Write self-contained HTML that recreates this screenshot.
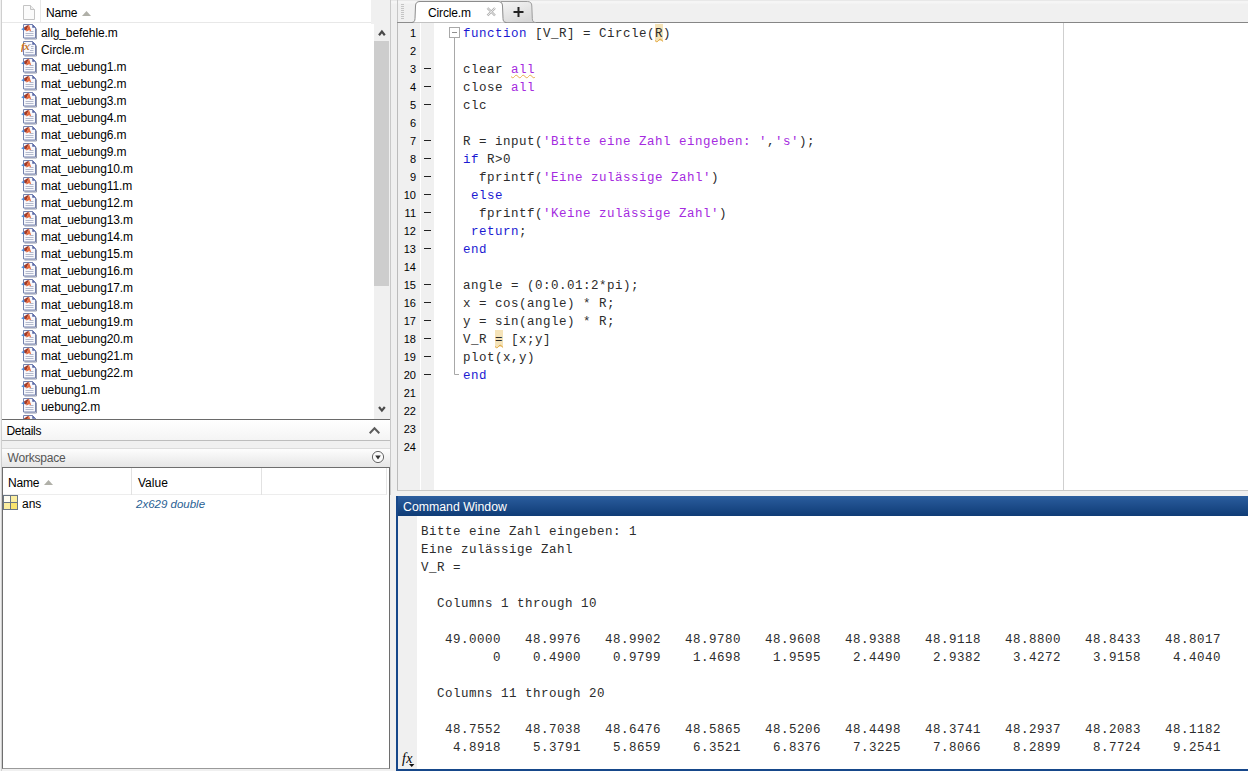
<!DOCTYPE html>
<html><head><meta charset="utf-8"><title>MATLAB</title>
<style>
html,body{margin:0;padding:0}
body{width:1248px;height:771px;overflow:hidden;position:relative;background:#f0f0f0;font-family:"Liberation Sans",sans-serif;font-size:12px;color:#000}
div,span{box-sizing:border-box}
.abs{position:absolute}
#files{left:2px;top:0;width:388px;height:420px;background:#fff;border-bottom:1px solid #6a6a6a;overflow:hidden}
#fhead{left:0;top:0;width:370px;height:23px;border-bottom:1px solid #e8e8e8;border-right:1px solid #e2e2e2;background:#fff}
.row{position:absolute;left:0;height:17px;width:372px;line-height:17px;white-space:nowrap}
.row .fi{position:absolute;left:19px;top:0}
.row .nm{position:absolute;left:39px;top:1px;font-size:12px;letter-spacing:-0.1px}
#sb{left:372px;top:24px;width:16px;height:395px;background:#f0f0f0}
#thumb{left:0;top:17px;width:15px;height:245px;background:#cdcdcd}
#details{left:2px;top:420px;width:388px;height:21px;background:linear-gradient(#fff,#f4f4f4);border-bottom:1px solid #bdbdbd;line-height:22px;padding-left:4.5px;letter-spacing:-0.3px}
#wstitle{left:2px;top:448px;width:388px;height:19px;background:linear-gradient(#fdfdfd,#e6e6e6);border-top:1px solid #dcdcdc;color:#555;line-height:19px;padding-left:5.500px;letter-spacing:-0.2px}
#wstab{left:2px;top:467px;width:388px;height:302px;background:#fff;border:1px solid #6e6e6e;border-bottom:1px solid #9a9a9a}
#vline1{left:0;top:0;width:2px;height:771px;background:#f0f0f0;border-right:1px solid #cfcfcf}
#ed{left:397px;top:23px;width:851px;height:468px;background:#fff;border-left:1px solid #bcbcbc;border-bottom:1px solid #c8c8c8}
#gut1{left:0;top:0;width:22px;height:467px;background:#f0f0f0}
#gut2{left:23px;top:0;width:13px;height:467px;background:#f0f0f0}
.ln{position:absolute;left:0;width:18px;margin-top:0;text-align:right;height:18px;line-height:18px;font-size:11px}
.ds{position:absolute;left:26px;width:7px;height:1px;background:#222}
.cl{position:absolute;left:65px;margin-top:1px;height:18px;line-height:18px;white-space:pre;font-family:"Liberation Mono",monospace;font-size:12.5px;letter-spacing:0.5px;color:#2c2c2c}
.k{color:#1a1ad2}.s{color:#a52be0}
.hl{background:#f5e3b8;padding:3px 0 0 0;text-decoration:underline wavy #e0a030 1px;text-underline-offset:1px}
.sq{text-decoration:underline wavy #e8b050 1px;text-underline-offset:1px}
#cw{left:396px;top:496px;width:852px;height:275px;background:#fff;border-left:2px solid #16478a;border-bottom:2px solid #16478a}
#cwt{left:0;top:0;width:850px;height:20px;background:linear-gradient(#2b5d9e,#0f3c76);color:#fff;line-height:23px;padding-left:5px;font-size:12.3px;overflow:hidden}
#cwg{left:0;top:20px;width:19px;height:253px;background:#f0f0f0}
.cm{position:absolute;left:23px;margin-top:1px;height:18px;line-height:18px;white-space:pre;font-family:"Liberation Mono",monospace;font-size:12.5px;letter-spacing:0.5px;color:#2c2c2c}
</style></head><body>

<div id="files" class="abs">
<div id="fhead" class="abs"><svg class="abs" style="left:20px;top:5px" width="14" height="16" viewBox="0 0 14 16"><path d="M1.5 0.5h7l4 4v10h-11z" fill="#fbfbfb" stroke="#c4c4c4"/><path d="M8.5 0.5v4h4" fill="#eee" stroke="#c4c4c4"/></svg><div class="abs" style="left:38px;top:0;width:1px;height:23px;background:#e8e8e8"></div><span class="abs" style="left:44px;top:5px;font-size:12px;line-height:16px;letter-spacing:-0.2px">Name</span><svg class="abs" style="left:80px;top:11px" width="9" height="5"><path d="M0 5L4.5 0L9 5z" fill="#b0b0a8"/></svg></div>
<div class="row" style="top:24px"><svg class="fi" width="16" height="16" viewBox="0 0 16 16"><path d="M3.500 15H15.500V4.500" fill="none" stroke="#9499ad" stroke-width="1"/><path d="M2.500 0.500H11.500L14.500 3.500V14H2.500z" fill="#f7f8fc" stroke="#7482ae" stroke-width="1"/><path d="M11.500 0.500V3.500H14.500z" fill="#5c6aa8" stroke="#6674ac" stroke-width="0.600"/><path d="M8.500 7.500h4M4.500 9.500h8M4.500 11.500h8" stroke="#b4bacd" stroke-width="1"/><path d="M0.200 5.200L3 3.600L4.600 5.600L2.600 6.600z" fill="#4a8ad8"/><path d="M3 3.600L6 1.400L8 0.800L5.200 7L3.600 5.600z" fill="#a23a26"/><path d="M8 0.800L10.200 7.200L8 6.200L5.600 7.400L5.200 7z" fill="#e8693a"/></svg><span class="nm">allg_befehle.m</span></div>
<div class="row" style="top:41px"><svg class="fi" width="16" height="16" viewBox="0 0 16 16"><path d="M3.500 15H15.500V4.500" fill="none" stroke="#9499ad" stroke-width="1"/><path d="M2.500 0.500H11.500L14.500 3.500V14H2.500z" fill="#f7f8fc" stroke="#7482ae" stroke-width="1"/><path d="M11.500 0.500V3.500H14.500z" fill="#5c6aa8" stroke="#6674ac" stroke-width="0.600"/><path d="M7.500 3.500h3M10 5.500h2.500M10 7.500h2.500M9 9.500h3.500M4.500 11.500h8" stroke="#b4bacd" stroke-width="1"/><text x="0" y="9" font-family="Liberation Serif, serif" font-style="italic" font-weight="bold" font-size="11" letter-spacing="-0.300" fill="#c87422">fx</text></svg><span class="nm">Circle.m</span></div>
<div class="row" style="top:58px"><svg class="fi" width="16" height="16" viewBox="0 0 16 16"><path d="M3.500 15H15.500V4.500" fill="none" stroke="#9499ad" stroke-width="1"/><path d="M2.500 0.500H11.500L14.500 3.500V14H2.500z" fill="#f7f8fc" stroke="#7482ae" stroke-width="1"/><path d="M11.500 0.500V3.500H14.500z" fill="#5c6aa8" stroke="#6674ac" stroke-width="0.600"/><path d="M8.500 7.500h4M4.500 9.500h8M4.500 11.500h8" stroke="#b4bacd" stroke-width="1"/><path d="M0.200 5.200L3 3.600L4.600 5.600L2.600 6.600z" fill="#4a8ad8"/><path d="M3 3.600L6 1.400L8 0.800L5.200 7L3.600 5.600z" fill="#a23a26"/><path d="M8 0.800L10.200 7.200L8 6.200L5.600 7.400L5.200 7z" fill="#e8693a"/></svg><span class="nm">mat_uebung1.m</span></div>
<div class="row" style="top:75px"><svg class="fi" width="16" height="16" viewBox="0 0 16 16"><path d="M3.500 15H15.500V4.500" fill="none" stroke="#9499ad" stroke-width="1"/><path d="M2.500 0.500H11.500L14.500 3.500V14H2.500z" fill="#f7f8fc" stroke="#7482ae" stroke-width="1"/><path d="M11.500 0.500V3.500H14.500z" fill="#5c6aa8" stroke="#6674ac" stroke-width="0.600"/><path d="M8.500 7.500h4M4.500 9.500h8M4.500 11.500h8" stroke="#b4bacd" stroke-width="1"/><path d="M0.200 5.200L3 3.600L4.600 5.600L2.600 6.600z" fill="#4a8ad8"/><path d="M3 3.600L6 1.400L8 0.800L5.200 7L3.600 5.600z" fill="#a23a26"/><path d="M8 0.800L10.200 7.200L8 6.200L5.600 7.400L5.200 7z" fill="#e8693a"/></svg><span class="nm">mat_uebung2.m</span></div>
<div class="row" style="top:92px"><svg class="fi" width="16" height="16" viewBox="0 0 16 16"><path d="M3.500 15H15.500V4.500" fill="none" stroke="#9499ad" stroke-width="1"/><path d="M2.500 0.500H11.500L14.500 3.500V14H2.500z" fill="#f7f8fc" stroke="#7482ae" stroke-width="1"/><path d="M11.500 0.500V3.500H14.500z" fill="#5c6aa8" stroke="#6674ac" stroke-width="0.600"/><path d="M8.500 7.500h4M4.500 9.500h8M4.500 11.500h8" stroke="#b4bacd" stroke-width="1"/><path d="M0.200 5.200L3 3.600L4.600 5.600L2.600 6.600z" fill="#4a8ad8"/><path d="M3 3.600L6 1.400L8 0.800L5.200 7L3.600 5.600z" fill="#a23a26"/><path d="M8 0.800L10.200 7.200L8 6.200L5.600 7.400L5.200 7z" fill="#e8693a"/></svg><span class="nm">mat_uebung3.m</span></div>
<div class="row" style="top:109px"><svg class="fi" width="16" height="16" viewBox="0 0 16 16"><path d="M3.500 15H15.500V4.500" fill="none" stroke="#9499ad" stroke-width="1"/><path d="M2.500 0.500H11.500L14.500 3.500V14H2.500z" fill="#f7f8fc" stroke="#7482ae" stroke-width="1"/><path d="M11.500 0.500V3.500H14.500z" fill="#5c6aa8" stroke="#6674ac" stroke-width="0.600"/><path d="M8.500 7.500h4M4.500 9.500h8M4.500 11.500h8" stroke="#b4bacd" stroke-width="1"/><path d="M0.200 5.200L3 3.600L4.600 5.600L2.600 6.600z" fill="#4a8ad8"/><path d="M3 3.600L6 1.400L8 0.800L5.200 7L3.600 5.600z" fill="#a23a26"/><path d="M8 0.800L10.200 7.200L8 6.200L5.600 7.400L5.200 7z" fill="#e8693a"/></svg><span class="nm">mat_uebung4.m</span></div>
<div class="row" style="top:126px"><svg class="fi" width="16" height="16" viewBox="0 0 16 16"><path d="M3.500 15H15.500V4.500" fill="none" stroke="#9499ad" stroke-width="1"/><path d="M2.500 0.500H11.500L14.500 3.500V14H2.500z" fill="#f7f8fc" stroke="#7482ae" stroke-width="1"/><path d="M11.500 0.500V3.500H14.500z" fill="#5c6aa8" stroke="#6674ac" stroke-width="0.600"/><path d="M8.500 7.500h4M4.500 9.500h8M4.500 11.500h8" stroke="#b4bacd" stroke-width="1"/><path d="M0.200 5.200L3 3.600L4.600 5.600L2.600 6.600z" fill="#4a8ad8"/><path d="M3 3.600L6 1.400L8 0.800L5.200 7L3.600 5.600z" fill="#a23a26"/><path d="M8 0.800L10.200 7.200L8 6.200L5.600 7.400L5.200 7z" fill="#e8693a"/></svg><span class="nm">mat_uebung6.m</span></div>
<div class="row" style="top:143px"><svg class="fi" width="16" height="16" viewBox="0 0 16 16"><path d="M3.500 15H15.500V4.500" fill="none" stroke="#9499ad" stroke-width="1"/><path d="M2.500 0.500H11.500L14.500 3.500V14H2.500z" fill="#f7f8fc" stroke="#7482ae" stroke-width="1"/><path d="M11.500 0.500V3.500H14.500z" fill="#5c6aa8" stroke="#6674ac" stroke-width="0.600"/><path d="M8.500 7.500h4M4.500 9.500h8M4.500 11.500h8" stroke="#b4bacd" stroke-width="1"/><path d="M0.200 5.200L3 3.600L4.600 5.600L2.600 6.600z" fill="#4a8ad8"/><path d="M3 3.600L6 1.400L8 0.800L5.200 7L3.600 5.600z" fill="#a23a26"/><path d="M8 0.800L10.200 7.200L8 6.200L5.600 7.400L5.200 7z" fill="#e8693a"/></svg><span class="nm">mat_uebung9.m</span></div>
<div class="row" style="top:160px"><svg class="fi" width="16" height="16" viewBox="0 0 16 16"><path d="M3.500 15H15.500V4.500" fill="none" stroke="#9499ad" stroke-width="1"/><path d="M2.500 0.500H11.500L14.500 3.500V14H2.500z" fill="#f7f8fc" stroke="#7482ae" stroke-width="1"/><path d="M11.500 0.500V3.500H14.500z" fill="#5c6aa8" stroke="#6674ac" stroke-width="0.600"/><path d="M8.500 7.500h4M4.500 9.500h8M4.500 11.500h8" stroke="#b4bacd" stroke-width="1"/><path d="M0.200 5.200L3 3.600L4.600 5.600L2.600 6.600z" fill="#4a8ad8"/><path d="M3 3.600L6 1.400L8 0.800L5.200 7L3.600 5.600z" fill="#a23a26"/><path d="M8 0.800L10.200 7.200L8 6.200L5.600 7.400L5.200 7z" fill="#e8693a"/></svg><span class="nm">mat_uebung10.m</span></div>
<div class="row" style="top:177px"><svg class="fi" width="16" height="16" viewBox="0 0 16 16"><path d="M3.500 15H15.500V4.500" fill="none" stroke="#9499ad" stroke-width="1"/><path d="M2.500 0.500H11.500L14.500 3.500V14H2.500z" fill="#f7f8fc" stroke="#7482ae" stroke-width="1"/><path d="M11.500 0.500V3.500H14.500z" fill="#5c6aa8" stroke="#6674ac" stroke-width="0.600"/><path d="M8.500 7.500h4M4.500 9.500h8M4.500 11.500h8" stroke="#b4bacd" stroke-width="1"/><path d="M0.200 5.200L3 3.600L4.600 5.600L2.600 6.600z" fill="#4a8ad8"/><path d="M3 3.600L6 1.400L8 0.800L5.200 7L3.600 5.600z" fill="#a23a26"/><path d="M8 0.800L10.200 7.200L8 6.200L5.600 7.400L5.200 7z" fill="#e8693a"/></svg><span class="nm">mat_uebung11.m</span></div>
<div class="row" style="top:194px"><svg class="fi" width="16" height="16" viewBox="0 0 16 16"><path d="M3.500 15H15.500V4.500" fill="none" stroke="#9499ad" stroke-width="1"/><path d="M2.500 0.500H11.500L14.500 3.500V14H2.500z" fill="#f7f8fc" stroke="#7482ae" stroke-width="1"/><path d="M11.500 0.500V3.500H14.500z" fill="#5c6aa8" stroke="#6674ac" stroke-width="0.600"/><path d="M8.500 7.500h4M4.500 9.500h8M4.500 11.500h8" stroke="#b4bacd" stroke-width="1"/><path d="M0.200 5.200L3 3.600L4.600 5.600L2.600 6.600z" fill="#4a8ad8"/><path d="M3 3.600L6 1.400L8 0.800L5.200 7L3.600 5.600z" fill="#a23a26"/><path d="M8 0.800L10.200 7.200L8 6.200L5.600 7.400L5.200 7z" fill="#e8693a"/></svg><span class="nm">mat_uebung12.m</span></div>
<div class="row" style="top:211px"><svg class="fi" width="16" height="16" viewBox="0 0 16 16"><path d="M3.500 15H15.500V4.500" fill="none" stroke="#9499ad" stroke-width="1"/><path d="M2.500 0.500H11.500L14.500 3.500V14H2.500z" fill="#f7f8fc" stroke="#7482ae" stroke-width="1"/><path d="M11.500 0.500V3.500H14.500z" fill="#5c6aa8" stroke="#6674ac" stroke-width="0.600"/><path d="M8.500 7.500h4M4.500 9.500h8M4.500 11.500h8" stroke="#b4bacd" stroke-width="1"/><path d="M0.200 5.200L3 3.600L4.600 5.600L2.600 6.600z" fill="#4a8ad8"/><path d="M3 3.600L6 1.400L8 0.800L5.200 7L3.600 5.600z" fill="#a23a26"/><path d="M8 0.800L10.200 7.200L8 6.200L5.600 7.400L5.200 7z" fill="#e8693a"/></svg><span class="nm">mat_uebung13.m</span></div>
<div class="row" style="top:228px"><svg class="fi" width="16" height="16" viewBox="0 0 16 16"><path d="M3.500 15H15.500V4.500" fill="none" stroke="#9499ad" stroke-width="1"/><path d="M2.500 0.500H11.500L14.500 3.500V14H2.500z" fill="#f7f8fc" stroke="#7482ae" stroke-width="1"/><path d="M11.500 0.500V3.500H14.500z" fill="#5c6aa8" stroke="#6674ac" stroke-width="0.600"/><path d="M8.500 7.500h4M4.500 9.500h8M4.500 11.500h8" stroke="#b4bacd" stroke-width="1"/><path d="M0.200 5.200L3 3.600L4.600 5.600L2.600 6.600z" fill="#4a8ad8"/><path d="M3 3.600L6 1.400L8 0.800L5.200 7L3.600 5.600z" fill="#a23a26"/><path d="M8 0.800L10.200 7.200L8 6.200L5.600 7.400L5.200 7z" fill="#e8693a"/></svg><span class="nm">mat_uebung14.m</span></div>
<div class="row" style="top:245px"><svg class="fi" width="16" height="16" viewBox="0 0 16 16"><path d="M3.500 15H15.500V4.500" fill="none" stroke="#9499ad" stroke-width="1"/><path d="M2.500 0.500H11.500L14.500 3.500V14H2.500z" fill="#f7f8fc" stroke="#7482ae" stroke-width="1"/><path d="M11.500 0.500V3.500H14.500z" fill="#5c6aa8" stroke="#6674ac" stroke-width="0.600"/><path d="M8.500 7.500h4M4.500 9.500h8M4.500 11.500h8" stroke="#b4bacd" stroke-width="1"/><path d="M0.200 5.200L3 3.600L4.600 5.600L2.600 6.600z" fill="#4a8ad8"/><path d="M3 3.600L6 1.400L8 0.800L5.200 7L3.600 5.600z" fill="#a23a26"/><path d="M8 0.800L10.200 7.200L8 6.200L5.600 7.400L5.200 7z" fill="#e8693a"/></svg><span class="nm">mat_uebung15.m</span></div>
<div class="row" style="top:262px"><svg class="fi" width="16" height="16" viewBox="0 0 16 16"><path d="M3.500 15H15.500V4.500" fill="none" stroke="#9499ad" stroke-width="1"/><path d="M2.500 0.500H11.500L14.500 3.500V14H2.500z" fill="#f7f8fc" stroke="#7482ae" stroke-width="1"/><path d="M11.500 0.500V3.500H14.500z" fill="#5c6aa8" stroke="#6674ac" stroke-width="0.600"/><path d="M8.500 7.500h4M4.500 9.500h8M4.500 11.500h8" stroke="#b4bacd" stroke-width="1"/><path d="M0.200 5.200L3 3.600L4.600 5.600L2.600 6.600z" fill="#4a8ad8"/><path d="M3 3.600L6 1.400L8 0.800L5.200 7L3.600 5.600z" fill="#a23a26"/><path d="M8 0.800L10.200 7.200L8 6.200L5.600 7.400L5.200 7z" fill="#e8693a"/></svg><span class="nm">mat_uebung16.m</span></div>
<div class="row" style="top:279px"><svg class="fi" width="16" height="16" viewBox="0 0 16 16"><path d="M3.500 15H15.500V4.500" fill="none" stroke="#9499ad" stroke-width="1"/><path d="M2.500 0.500H11.500L14.500 3.500V14H2.500z" fill="#f7f8fc" stroke="#7482ae" stroke-width="1"/><path d="M11.500 0.500V3.500H14.500z" fill="#5c6aa8" stroke="#6674ac" stroke-width="0.600"/><path d="M8.500 7.500h4M4.500 9.500h8M4.500 11.500h8" stroke="#b4bacd" stroke-width="1"/><path d="M0.200 5.200L3 3.600L4.600 5.600L2.600 6.600z" fill="#4a8ad8"/><path d="M3 3.600L6 1.400L8 0.800L5.200 7L3.600 5.600z" fill="#a23a26"/><path d="M8 0.800L10.200 7.200L8 6.200L5.600 7.400L5.200 7z" fill="#e8693a"/></svg><span class="nm">mat_uebung17.m</span></div>
<div class="row" style="top:296px"><svg class="fi" width="16" height="16" viewBox="0 0 16 16"><path d="M3.500 15H15.500V4.500" fill="none" stroke="#9499ad" stroke-width="1"/><path d="M2.500 0.500H11.500L14.500 3.500V14H2.500z" fill="#f7f8fc" stroke="#7482ae" stroke-width="1"/><path d="M11.500 0.500V3.500H14.500z" fill="#5c6aa8" stroke="#6674ac" stroke-width="0.600"/><path d="M8.500 7.500h4M4.500 9.500h8M4.500 11.500h8" stroke="#b4bacd" stroke-width="1"/><path d="M0.200 5.200L3 3.600L4.600 5.600L2.600 6.600z" fill="#4a8ad8"/><path d="M3 3.600L6 1.400L8 0.800L5.200 7L3.600 5.600z" fill="#a23a26"/><path d="M8 0.800L10.200 7.200L8 6.200L5.600 7.400L5.200 7z" fill="#e8693a"/></svg><span class="nm">mat_uebung18.m</span></div>
<div class="row" style="top:313px"><svg class="fi" width="16" height="16" viewBox="0 0 16 16"><path d="M3.500 15H15.500V4.500" fill="none" stroke="#9499ad" stroke-width="1"/><path d="M2.500 0.500H11.500L14.500 3.500V14H2.500z" fill="#f7f8fc" stroke="#7482ae" stroke-width="1"/><path d="M11.500 0.500V3.500H14.500z" fill="#5c6aa8" stroke="#6674ac" stroke-width="0.600"/><path d="M8.500 7.500h4M4.500 9.500h8M4.500 11.500h8" stroke="#b4bacd" stroke-width="1"/><path d="M0.200 5.200L3 3.600L4.600 5.600L2.600 6.600z" fill="#4a8ad8"/><path d="M3 3.600L6 1.400L8 0.800L5.200 7L3.600 5.600z" fill="#a23a26"/><path d="M8 0.800L10.200 7.200L8 6.200L5.600 7.400L5.200 7z" fill="#e8693a"/></svg><span class="nm">mat_uebung19.m</span></div>
<div class="row" style="top:330px"><svg class="fi" width="16" height="16" viewBox="0 0 16 16"><path d="M3.500 15H15.500V4.500" fill="none" stroke="#9499ad" stroke-width="1"/><path d="M2.500 0.500H11.500L14.500 3.500V14H2.500z" fill="#f7f8fc" stroke="#7482ae" stroke-width="1"/><path d="M11.500 0.500V3.500H14.500z" fill="#5c6aa8" stroke="#6674ac" stroke-width="0.600"/><path d="M8.500 7.500h4M4.500 9.500h8M4.500 11.500h8" stroke="#b4bacd" stroke-width="1"/><path d="M0.200 5.200L3 3.600L4.600 5.600L2.600 6.600z" fill="#4a8ad8"/><path d="M3 3.600L6 1.400L8 0.800L5.200 7L3.600 5.600z" fill="#a23a26"/><path d="M8 0.800L10.200 7.200L8 6.200L5.600 7.400L5.200 7z" fill="#e8693a"/></svg><span class="nm">mat_uebung20.m</span></div>
<div class="row" style="top:347px"><svg class="fi" width="16" height="16" viewBox="0 0 16 16"><path d="M3.500 15H15.500V4.500" fill="none" stroke="#9499ad" stroke-width="1"/><path d="M2.500 0.500H11.500L14.500 3.500V14H2.500z" fill="#f7f8fc" stroke="#7482ae" stroke-width="1"/><path d="M11.500 0.500V3.500H14.500z" fill="#5c6aa8" stroke="#6674ac" stroke-width="0.600"/><path d="M8.500 7.500h4M4.500 9.500h8M4.500 11.500h8" stroke="#b4bacd" stroke-width="1"/><path d="M0.200 5.200L3 3.600L4.600 5.600L2.600 6.600z" fill="#4a8ad8"/><path d="M3 3.600L6 1.400L8 0.800L5.200 7L3.600 5.600z" fill="#a23a26"/><path d="M8 0.800L10.200 7.200L8 6.200L5.600 7.400L5.200 7z" fill="#e8693a"/></svg><span class="nm">mat_uebung21.m</span></div>
<div class="row" style="top:364px"><svg class="fi" width="16" height="16" viewBox="0 0 16 16"><path d="M3.500 15H15.500V4.500" fill="none" stroke="#9499ad" stroke-width="1"/><path d="M2.500 0.500H11.500L14.500 3.500V14H2.500z" fill="#f7f8fc" stroke="#7482ae" stroke-width="1"/><path d="M11.500 0.500V3.500H14.500z" fill="#5c6aa8" stroke="#6674ac" stroke-width="0.600"/><path d="M8.500 7.500h4M4.500 9.500h8M4.500 11.500h8" stroke="#b4bacd" stroke-width="1"/><path d="M0.200 5.200L3 3.600L4.600 5.600L2.600 6.600z" fill="#4a8ad8"/><path d="M3 3.600L6 1.400L8 0.800L5.200 7L3.600 5.600z" fill="#a23a26"/><path d="M8 0.800L10.200 7.200L8 6.200L5.600 7.400L5.200 7z" fill="#e8693a"/></svg><span class="nm">mat_uebung22.m</span></div>
<div class="row" style="top:381px"><svg class="fi" width="16" height="16" viewBox="0 0 16 16"><path d="M3.500 15H15.500V4.500" fill="none" stroke="#9499ad" stroke-width="1"/><path d="M2.500 0.500H11.500L14.500 3.500V14H2.500z" fill="#f7f8fc" stroke="#7482ae" stroke-width="1"/><path d="M11.500 0.500V3.500H14.500z" fill="#5c6aa8" stroke="#6674ac" stroke-width="0.600"/><path d="M8.500 7.500h4M4.500 9.500h8M4.500 11.500h8" stroke="#b4bacd" stroke-width="1"/><path d="M0.200 5.200L3 3.600L4.600 5.600L2.600 6.600z" fill="#4a8ad8"/><path d="M3 3.600L6 1.400L8 0.800L5.200 7L3.600 5.600z" fill="#a23a26"/><path d="M8 0.800L10.200 7.200L8 6.200L5.600 7.400L5.200 7z" fill="#e8693a"/></svg><span class="nm">uebung1.m</span></div>
<div class="row" style="top:398px"><svg class="fi" width="16" height="16" viewBox="0 0 16 16"><path d="M3.500 15H15.500V4.500" fill="none" stroke="#9499ad" stroke-width="1"/><path d="M2.500 0.500H11.500L14.500 3.500V14H2.500z" fill="#f7f8fc" stroke="#7482ae" stroke-width="1"/><path d="M11.500 0.500V3.500H14.500z" fill="#5c6aa8" stroke="#6674ac" stroke-width="0.600"/><path d="M8.500 7.500h4M4.500 9.500h8M4.500 11.500h8" stroke="#b4bacd" stroke-width="1"/><path d="M0.200 5.200L3 3.600L4.600 5.600L2.600 6.600z" fill="#4a8ad8"/><path d="M3 3.600L6 1.400L8 0.800L5.200 7L3.600 5.600z" fill="#a23a26"/><path d="M8 0.800L10.200 7.200L8 6.200L5.600 7.400L5.200 7z" fill="#e8693a"/></svg><span class="nm">uebung2.m</span></div>
<div class="row" style="top:415px"><svg class="fi" width="16" height="16" viewBox="0 0 16 16"><path d="M3.500 15H15.500V4.500" fill="none" stroke="#9499ad" stroke-width="1"/><path d="M2.500 0.500H11.500L14.500 3.500V14H2.500z" fill="#f7f8fc" stroke="#7482ae" stroke-width="1"/><path d="M11.500 0.500V3.500H14.500z" fill="#5c6aa8" stroke="#6674ac" stroke-width="0.600"/><path d="M8.500 7.500h4M4.500 9.500h8M4.500 11.500h8" stroke="#b4bacd" stroke-width="1"/><path d="M0.200 5.200L3 3.600L4.600 5.600L2.600 6.600z" fill="#4a8ad8"/><path d="M3 3.600L6 1.400L8 0.800L5.200 7L3.600 5.600z" fill="#a23a26"/><path d="M8 0.800L10.200 7.200L8 6.200L5.600 7.400L5.200 7z" fill="#e8693a"/></svg><span class="nm"></span></div>
<div class="abs" style="left:369px;top:0;width:19px;height:24px;background:#f0f0f0"></div><div id="sb" class="abs"><div id="thumb" class="abs"></div><svg class="abs" style="left:4px;top:5px" width="8" height="8"><path d="M1 6.200L3.900 2.600L6.800 6.200" fill="none" stroke="#4a4a4a" stroke-width="2.200"/></svg><svg class="abs" style="left:4px;top:381px" width="8" height="8"><path d="M1 2L3.900 5.600L6.800 2" fill="none" stroke="#4a4a4a" stroke-width="2.200"/></svg></div>
</div>
<div id="details" class="abs">Details<svg class="abs" style="left:367px;top:6px" width="11" height="9"><path d="M0.700 7.200L5.500 2.300L10.300 7.200" fill="none" stroke="#5c5c5c" stroke-width="2"/></svg></div>
<div id="wstitle" class="abs">Workspace<svg class="abs" style="left:369px;top:1px" width="14" height="14" viewBox="0 0 14 14"><circle cx="7" cy="7" r="5.600" fill="#fafafa" stroke="#666" stroke-width="1"/><path d="M4.200 5.500h5.600L7 9.500z" fill="#333"/></svg></div>
<div id="wstab" class="abs"><div class="abs" style="left:0;top:0;width:384px;height:27px;border-bottom:1px solid #ededed;border-right:1px solid #e6e6e6"></div><div class="abs" style="left:128px;top:0;width:1px;height:27px;background:#e2e2e2"></div><div class="abs" style="left:258px;top:0;width:1px;height:27px;background:#e2e2e2"></div><span class="abs" style="left:5px;top:7px;line-height:16px;font-size:12px;letter-spacing:-0.2px">Name</span><svg class="abs" style="left:41px;top:12px" width="9" height="5"><path d="M0 5L4.500 0L9 5z" fill="#b0b0a8"/></svg><span class="abs" style="left:135px;top:7px;line-height:16px;font-size:12px">Value</span><svg class="abs" style="left:0px;top:27px" width="15" height="15" viewBox="0 0 15 15"><rect x="0.500" y="0.500" width="14" height="14" fill="#fbeea0" stroke="#6a7684"/><rect x="1" y="1" width="6" height="6" fill="#fffdf2"/><rect x="8" y="8" width="6" height="6" fill="#f9e36e"/><path d="M7.500 1v13M1 7.500h13" stroke="#6a7684" stroke-width="1"/></svg><span class="abs" style="left:19px;top:28px;line-height:16px;font-size:12px">ans</span><span class="abs" style="left:133px;top:28px;line-height:16px;font-size:11.5px;font-style:italic;color:#2a5f94">2x629 double</span></div>
<div id="vline1" class="abs"></div>
<div class="abs" style="left:391px;top:0;width:857px;height:23px;background:linear-gradient(#e8e8e8 0,#e8e8e8 1px,#f5f5f5 1px,#f5f5f5 3px,#f0f0f0 4px)"></div>
<div class="abs" style="left:390px;top:0;width:1px;height:495px;background:#c9c9c9"></div>
<div class="abs" style="left:397px;top:22px;width:851px;height:1px;background:#868686"></div><div class="abs" style="left:397px;top:0;width:1px;height:22px;background:#c6c6c6"></div>
<svg class="abs" style="left:397px;top:0" width="160" height="24" viewBox="0 0 160 24"><defs><linearGradient id="tg" x1="0" y1="0" x2="0.600" y2="1"><stop offset="0" stop-color="#f6f6f6"/><stop offset="1" stop-color="#d8d8d8"/></linearGradient></defs><path d="M104 1.500H130.300C133.300 1.500 134.800 3 134.800 6L135.300 18.500C135.300 21 136.300 22.500 138.800 22.500H104z" fill="url(#tg)" stroke="#9c9c9c"/><path d="M0 22.500H14.500C17 22.500 18 21 18 18.500L18.500 6C18.500 3 20 1.500 23 1.500H101C104 1.500 105.500 3 105.500 6L106 18.500C106 21 107 22.500 109.500 22.500" fill="#fff" stroke="#8c8c8c"/><rect x="1" y="23" width="108" height="1" fill="#fff"/><g stroke="#c4c4c4" stroke-width="1"><path d="M4 4.500h3M4 6.500h3M4 8.500h3M4 10.500h3M4 12.500h3M4 14.500h3M4 16.500h3M4 18.500h3"/></g><path d="M90.500 8L98 15.500M98 8L90.500 15.500" stroke="#b4b4b4" stroke-width="2.400" fill="none"/><path d="M90.500 8L98 15.500M98 8L90.500 15.500" stroke="#f4f4f4" stroke-width="0.800" fill="none"/><path d="M116.500 12H126.500M121.500 7V17" stroke="#222" stroke-width="2" fill="none"/></svg>
<span class="abs" style="left:428px;top:5px;line-height:16px;font-size:12px;letter-spacing:-0.15px">Circle.m</span>
<div id="ed" class="abs"><div id="gut1" class="abs"></div><div id="gut2" class="abs"></div>
<div class="abs" style="left:665px;top:0;width:1px;height:467px;background:#cfcfcf"></div>
<div class="ln" style="top:1px">1</div>
<div class="cl" style="top:1px"><span class="k">function</span> [V_R] = Circle(<span class="hl">R</span>)</div>
<div class="ln" style="top:19px">2</div>
<div class="ln" style="top:37px">3</div>
<div class="ds" style="top:45px"></div>
<div class="cl" style="top:37px">clear <span class="s"><span class="sq">all</span></span></div>
<div class="ln" style="top:55px">4</div>
<div class="ds" style="top:63px"></div>
<div class="cl" style="top:55px">close <span class="s">all</span></div>
<div class="ln" style="top:73px">5</div>
<div class="ds" style="top:81px"></div>
<div class="cl" style="top:73px">clc</div>
<div class="ln" style="top:91px">6</div>
<div class="ln" style="top:109px">7</div>
<div class="ds" style="top:117px"></div>
<div class="cl" style="top:109px">R = input(<span class="s">'Bitte eine Zahl eingeben: '</span>,<span class="s">'s'</span>);</div>
<div class="ln" style="top:127px">8</div>
<div class="ds" style="top:135px"></div>
<div class="cl" style="top:127px"><span class="k">if</span> R&gt;0</div>
<div class="ln" style="top:145px">9</div>
<div class="ds" style="top:153px"></div>
<div class="cl" style="top:145px">  fprintf(<span class="s">'Eine zulässige Zahl'</span>)</div>
<div class="ln" style="top:163px">10</div>
<div class="ds" style="top:171px"></div>
<div class="cl" style="top:163px"> <span class="k">else</span></div>
<div class="ln" style="top:181px">11</div>
<div class="ds" style="top:189px"></div>
<div class="cl" style="top:181px">  fprintf(<span class="s">'Keine zulässige Zahl'</span>)</div>
<div class="ln" style="top:199px">12</div>
<div class="ds" style="top:207px"></div>
<div class="cl" style="top:199px"> <span class="k">return</span>;</div>
<div class="ln" style="top:217px">13</div>
<div class="ds" style="top:225px"></div>
<div class="cl" style="top:217px"><span class="k">end</span></div>
<div class="ln" style="top:235px">14</div>
<div class="ln" style="top:253px">15</div>
<div class="ds" style="top:261px"></div>
<div class="cl" style="top:253px">angle = (0:0.01:2*pi);</div>
<div class="ln" style="top:271px">16</div>
<div class="ds" style="top:279px"></div>
<div class="cl" style="top:271px">x = cos(angle) * R;</div>
<div class="ln" style="top:289px">17</div>
<div class="ds" style="top:297px"></div>
<div class="cl" style="top:289px">y = sin(angle) * R;</div>
<div class="ln" style="top:307px">18</div>
<div class="ds" style="top:315px"></div>
<div class="cl" style="top:307px">V_R <span class="hl">=</span> [x;y]</div>
<div class="ln" style="top:325px">19</div>
<div class="ds" style="top:333px"></div>
<div class="cl" style="top:325px">plot(x,y)</div>
<div class="ln" style="top:343px">20</div>
<div class="ds" style="top:351px"></div>
<div class="cl" style="top:343px"><span class="k">end</span></div>
<div class="ln" style="top:361px">21</div>
<div class="ln" style="top:379px">22</div>
<div class="ln" style="top:397px">23</div>
<div class="ln" style="top:415px">24</div>
<svg class="abs" style="left:51px;top:4px" width="12" height="360" viewBox="0 0 12 360"><rect x="0.500" y="0.500" width="10" height="10" fill="#fff" stroke="#a8a8a8"/><path d="M3 5.500h5" stroke="#909090"/><path d="M5.500 11V347.500H10" fill="none" stroke="#a8a8a8"/></svg>
</div>
<div id="cw" class="abs"><div id="cwt" class="abs">Command Window</div><div id="cwg" class="abs"></div>
<div class="cm" style="top:26px">Bitte eine Zahl eingeben: 1</div>
<div class="cm" style="top:44px">Eine zulässige Zahl</div>
<div class="cm" style="top:62px">V_R =</div>
<div class="cm" style="top:98px">  Columns 1 through 10</div>
<div class="cm" style="top:134px">   49.0000   48.9976   48.9902   48.9780   48.9608   48.9388   48.9118   48.8800   48.8433   48.8017</div>
<div class="cm" style="top:152px">         0    0.4900    0.9799    1.4698    1.9595    2.4490    2.9382    3.4272    3.9158    4.4040</div>
<div class="cm" style="top:188px">  Columns 11 through 20</div>
<div class="cm" style="top:224px">   48.7552   48.7038   48.6476   48.5865   48.5206   48.4498   48.3741   48.2937   48.2083   48.1182</div>
<div class="cm" style="top:242px">    4.8918    5.3791    5.8659    6.3521    6.8376    7.3225    7.8066    8.2899    8.7724    9.2541</div>
<span class="abs" style="left:4px;top:255px;font-family:'Liberation Serif',serif;font-style:italic;font-size:14px;line-height:16px;letter-spacing:0.3px">fx</span><svg class="abs" style="left:11px;top:268px" width="6" height="4"><path d="M0 0h5.400L2.700 3z" fill="#111"/></svg>
</div>
</body></html>
